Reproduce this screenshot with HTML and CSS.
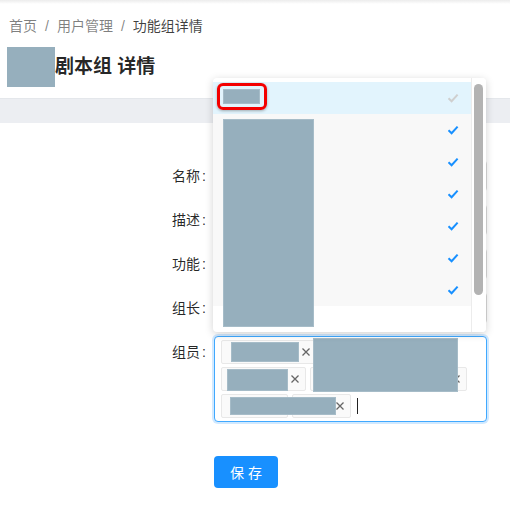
FILE: index.html
```html
<!DOCTYPE html>
<html lang="zh-CN">
<head>
    <meta charset="UTF-8">
    <meta name="viewport" content="width=device-width, initial-scale=1.0">
    <title>功能组详情</title>
    <link rel="stylesheet" href="styles.css">
</head>
<body>

    <div class="top-shade"></div>

    <div class="page-header">
        <div class="breadcrumb">
            <span class="crumb">首页</span>
            <span class="sep">/</span>
            <span class="crumb">用户管理</span>
            <span class="sep">/</span>
            <span class="crumb current">功能组详情</span>
        </div>
        <div class="title-row">
            <div class="title-redact"></div>
            <h1 class="title">剧本组 详情</h1>
        </div>
    </div>

    <div class="band"></div>

    <div class="card">
        <div class="form">
            <div class="form-item">
                <label class="form-label">名称</label>
                <div class="control"><div class="input"></div></div>
            </div>
            <div class="form-item">
                <label class="form-label">描述</label>
                <div class="control"><div class="input"></div></div>
            </div>
            <div class="form-item">
                <label class="form-label">功能</label>
                <div class="control"><div class="input"></div></div>
            </div>
            <div class="form-item">
                <label class="form-label">组长</label>
                <div class="control"><div class="input"></div></div>
            </div>
            <div class="form-item">
                <label class="form-label">组员</label>
                <div class="control">

                    <div class="dropdown">
                        <ul class="menu">
                            <li class="opt active"><svg class="check" viewBox="0 0 12 12"><polyline points="1.5,6.2 4.6,9.2 10.6,2.6"/></svg></li>
                            <li class="opt selected"><svg class="check" viewBox="0 0 12 12"><polyline points="1.5,6.2 4.6,9.2 10.6,2.6"/></svg></li>
                            <li class="opt selected"><svg class="check" viewBox="0 0 12 12"><polyline points="1.5,6.2 4.6,9.2 10.6,2.6"/></svg></li>
                            <li class="opt selected"><svg class="check" viewBox="0 0 12 12"><polyline points="1.5,6.2 4.6,9.2 10.6,2.6"/></svg></li>
                            <li class="opt selected"><svg class="check" viewBox="0 0 12 12"><polyline points="1.5,6.2 4.6,9.2 10.6,2.6"/></svg></li>
                            <li class="opt selected"><svg class="check" viewBox="0 0 12 12"><polyline points="1.5,6.2 4.6,9.2 10.6,2.6"/></svg></li>
                            <li class="opt selected"><svg class="check" viewBox="0 0 12 12"><polyline points="1.5,6.2 4.6,9.2 10.6,2.6"/></svg></li>
                            <li class="opt"></li>
                        </ul>
                        <div class="track"><div class="thumb"></div></div>
                        <div class="redact r-item1"></div>
                        <div class="mark"></div>
                        <div class="redact r-list"></div>
                    </div>

                    <div class="select focused">
                        <ul class="tags">
                            <li class="tag w96"><svg class="tag-x" viewBox="0 0 10 10"><path d="M1.5 1.5l7 7M8.5 1.5l-7 7"/></svg></li>
                            <li class="tag w134"><svg class="tag-x" viewBox="0 0 10 10"><path d="M1.5 1.5l7 7M8.5 1.5l-7 7"/></svg></li>
                            <li class="tag w85"><svg class="tag-x" viewBox="0 0 10 10"><path d="M1.5 1.5l7 7M8.5 1.5l-7 7"/></svg></li>
                            <li class="tag w157"><svg class="tag-x" viewBox="0 0 10 10"><path d="M1.5 1.5l7 7M8.5 1.5l-7 7"/></svg></li>
                            <li class="tag w67"><svg class="tag-x" viewBox="0 0 10 10"><path d="M1.5 1.5l7 7M8.5 1.5l-7 7"/></svg></li>
                            <li class="tag w59"><svg class="tag-x" viewBox="0 0 10 10"><path d="M1.5 1.5l7 7M8.5 1.5l-7 7"/></svg></li>
                            <li class="caret"></li>
                        </ul>
                        <div class="redact r-tag1"></div>
                        <div class="redact r-big"></div>
                        <div class="redact r-tag2"></div>
                        <div class="redact r-row3"></div>
                    </div>

                </div>
            </div>

            <div class="form-actions">
                <button class="button">保 存</button>
            </div>
        </div>
    </div>

</body>
</html>
```

FILE: styles.css
```css
body {
    margin: 0;
    background: #fff;
    font-family: "Liberation Sans", "Noto Sans CJK SC", sans-serif;
    font-size: 14px;
    color: rgba(0, 0, 0, 0.85);
}

ul {
    margin: 0;
    padding: 0;
    list-style: none;
}

.top-shade {
    height: 4px;
    background: linear-gradient(#ececec, #fff);
}

.page-header {
    padding: 11px 0 11px 9px;
}

.breadcrumb {
    display: flex;
    line-height: 22px;
    color: rgba(0, 0, 0, 0.5);
}

.sep {
    margin: 0 8px;
}

.crumb.current {
    color: rgba(0, 0, 0, 0.75);
}

.title-row {
    display: flex;
    align-items: center;
    height: 40px;
    margin-top: 10px;
    margin-left: -2px;
}

.title-redact {
    width: 48px;
    height: 40px;
    background: #96afbd;
}

.title {
    margin: 0;
    font-size: 19px;
    font-weight: 600;
    line-height: 32px;
    color: rgba(0, 0, 0, 0.85);
}

.band {
    height: 24px;
    background: #eceef2;
    border-top: 1px solid #e4e7eb;
}

.card {
    background: #fff;
    padding: 37px 0 40px;
}

.form-item {
    display: flex;
    align-items: flex-start;
    margin-bottom: 12px;
}

.form-label {
    width: 214px;
    flex-shrink: 0;
    text-align: right;
    line-height: 32px;
    color: rgba(0, 0, 0, 0.85);
}

.form-label::after {
    content: ":";
    margin: 0 8px 0 2px;
}

.control {
    position: relative;
    width: 273px;
}

.input {
    height: 32px;
    box-sizing: border-box;
    border: 1px solid #d9d9d9;
    border-radius: 4px;
    background: #fff;
}

/* multi select */
.select {
    position: relative;
    box-sizing: border-box;
    border: 1px solid #40a9ff;
    border-radius: 4px;
    box-shadow: 0 0 0 2px rgba(24, 144, 255, 0.2);
    background: #fff;
}

.tags {
    display: flex;
    flex-wrap: wrap;
    align-items: flex-start;
    padding: 0 0 3px 6px;
}

.tag {
    display: flex;
    justify-content: flex-end;
    align-items: center;
    box-sizing: border-box;
    height: 24px;
    margin: 3px 4px 0 0;
    padding-right: 5px;
    border: 1px solid #e8e8e8;
    border-radius: 2px;
    background: #fafafa;
}

.tag.w96 { width: 96px; }
.tag.w134 { width: 134px; }
.tag.w85 { width: 85px; }
.tag.w157 { width: 157px; }
.tag.w67 { width: 67px; }
.tag.w59 { width: 59px; }

.tag-x {
    width: 10px;
    height: 10px;
    fill: none;
    stroke: #666;
    stroke-width: 1.3;
}

.caret {
    width: 1px;
    height: 16px;
    margin: 7px 0 0 2px;
    background: #222;
}

/* dropdown, opened above the select */
.dropdown {
    position: absolute;
    left: -1px;
    bottom: calc(100% + 4px);
    z-index: 10;
    display: flex;
    width: 273px;
    height: 254px;
    overflow: hidden;
    background: #fff;
    border-radius: 4px;
    box-shadow: 0 2px 8px rgba(0, 0, 0, 0.18);
}

.menu {
    flex: 1;
    padding-top: 4px;
}

.opt {
    display: flex;
    justify-content: flex-end;
    align-items: center;
    height: 32px;
    padding: 0 12px;
}

.opt.active {
    background: #e2f4fd;
}

.opt.selected {
    background: #f8f8f8;
}

.check {
    width: 12px;
    height: 12px;
    fill: none;
    stroke: #1890ff;
    stroke-width: 2;
}

.opt.active .check {
    stroke: #cfcfcf;
}

.track {
    width: 14px;
    border-left: 1px solid #ececec;
    background: #fff;
}

.thumb {
    width: 9px;
    height: 211px;
    margin: 6px 0 0 2px;
    border-radius: 5px;
    background: #b3b3b3;
}

.redact {
    position: absolute;
    background: #96afbd;
    box-shadow: inset 0 0 0 1px #a6bcc8;
}

.r-item1 { left: 10px; top: 11px; width: 37px; height: 15px; }
.r-list { left: 10px; top: 41px; width: 91px; height: 208px; }

.mark {
    position: absolute;
    left: 4px;
    top: 5px;
    width: 50px;
    height: 27px;
    box-sizing: border-box;
    border: 3px solid #f30000;
    border-radius: 6px;
    box-shadow: 0 1px 3px rgba(0, 0, 0, 0.3);
}

.r-tag1 { left: 16px; top: 5px; width: 68px; height: 20px; }
.r-big { left: 98px; top: 1px; width: 145px; height: 54px; }
.r-tag2 { left: 12px; top: 32px; width: 61px; height: 22px; }
.r-row3 { left: 15px; top: 60px; width: 106px; height: 18px; }

.form-actions {
    padding: 22px 0 0 214px;
}

.button {
    min-width: 64px;
    height: 32px;
    padding: 0 15px;
    border: none;
    border-radius: 4px;
    background: #1890ff;
    color: #fff;
    font-family: "Liberation Sans", "Noto Sans CJK SC", sans-serif;
    font-size: 14px;
    cursor: pointer;
}
```
